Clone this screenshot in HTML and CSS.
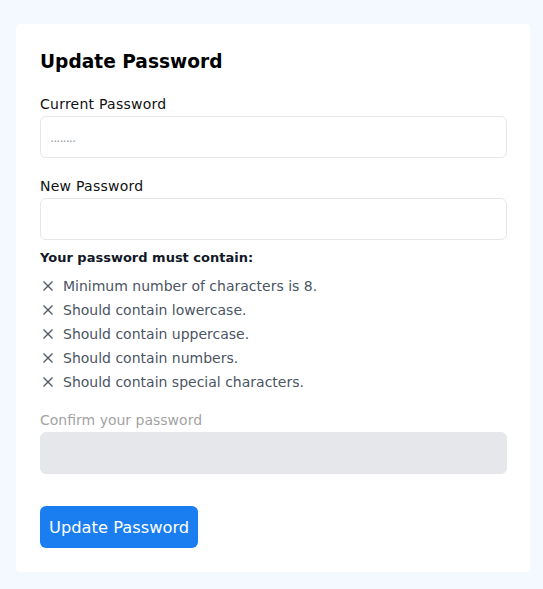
FILE: index.html
```
<!DOCTYPE html>
<html lang="en">
<head>
<meta charset="utf-8">
<title>Update Password</title>
<link rel="stylesheet" href="styles.css">
</head>
<body>
<div class="page">
  <form class="card">
    <h2 class="title">Update Password</h2>
    <label class="label label-first" for="cur">Current Password</label>
    <input class="field" id="cur" type="password" placeholder="........">
    <label class="label label-next" for="new">New Password</label>
    <input class="field" id="new" type="password">
    <p class="rules-title">Your password must contain:</p>
    <ul class="rules">
      <li class="rule"><svg class="x" viewBox="0 0 12 12" width="12" height="12"><path d="M1.5 1.5L10.5 10.5M10.5 1.5L1.5 10.5"/></svg><span>Minimum number of characters is 8.</span></li>
      <li class="rule"><svg class="x" viewBox="0 0 12 12" width="12" height="12"><path d="M1.5 1.5L10.5 10.5M10.5 1.5L1.5 10.5"/></svg><span>Should contain lowercase.</span></li>
      <li class="rule"><svg class="x" viewBox="0 0 12 12" width="12" height="12"><path d="M1.5 1.5L10.5 10.5M10.5 1.5L1.5 10.5"/></svg><span>Should contain uppercase.</span></li>
      <li class="rule"><svg class="x" viewBox="0 0 12 12" width="12" height="12"><path d="M1.5 1.5L10.5 10.5M10.5 1.5L1.5 10.5"/></svg><span>Should contain numbers.</span></li>
      <li class="rule"><svg class="x" viewBox="0 0 12 12" width="12" height="12"><path d="M1.5 1.5L10.5 10.5M10.5 1.5L1.5 10.5"/></svg><span>Should contain special characters.</span></li>
    </ul>
    <label class="label label-muted" for="conf">Confirm your password</label>
    <input class="field field-disabled" id="conf" type="password" disabled>
    <div class="actions">
      <button class="btn" type="button">Update Password</button>
    </div>
  </form>
</div>
</body>
</html>
```
FILE: styles.css
```
html, body {
  margin: 0;
  padding: 0;
  background: #f4f9ff;
}
body {
  font-family: "DejaVu Sans", "Open Sans", sans-serif;
  color: #111827;
}
.page {
  padding: 24px 13px 17px 16px;
}
.card {
  width: 514px;
  box-sizing: border-box;
  background: #ffffff;
  border-radius: 4px;
  padding: 24px 23px 24px 24px;
  display: flex;
  flex-direction: column;
}
.title {
  margin: 0;
  font-size: 18.6px;
  line-height: 28px;
  font-weight: 700;
  color: #000000;
}
.label {
  display: block;
  font-size: 14px;
  letter-spacing: 0.25px;
  line-height: 20px;
  color: #111111;
  margin-bottom: 2px;
}
.label-first { margin-top: 18px; }
.label-next { margin-top: 18px; }
.label-muted {
  margin-top: 16px;
  letter-spacing: 0;
  color: #a3a3a3;
}
.field {
  display: block;
  box-sizing: border-box;
  width: 100%;
  height: 42px;
  border: 1px solid #e5e7eb;
  border-radius: 6px;
  background: #ffffff;
  padding: 0 9px;
  font-family: inherit;
  font-size: 13px;
  outline: none;
}
.field::placeholder {
  color: #9ca3af;
  letter-spacing: -1px;
}
.field-disabled {
  background: #e5e7eb;
  border-color: #e5e7eb;
}
.rules-title {
  margin: 8px 0 0;
  font-size: 13px;
  line-height: 20px;
  font-weight: 700;
  color: #111827;
}
.rules {
  list-style: none;
  margin: 6px 0 0;
  padding: 0;
}
.rule {
  display: flex;
  align-items: center;
  gap: 9px;
  height: 24px;
  font-size: 14px;
  color: #4b5563;
}
.x {
  flex: none;
  margin-left: 2px;
  stroke: #4b5563;
  stroke-width: 1.3;
  fill: none;
}
.actions {
  margin-top: 32px;
  display: flex;
}
.btn {
  height: 42px;
  padding: 0 9px;
  border: none;
  border-radius: 6px;
  background: #1a7ef0;
  color: #ffffff;
  font-family: inherit;
  font-size: 16.3px;
  cursor: pointer;
}
```
